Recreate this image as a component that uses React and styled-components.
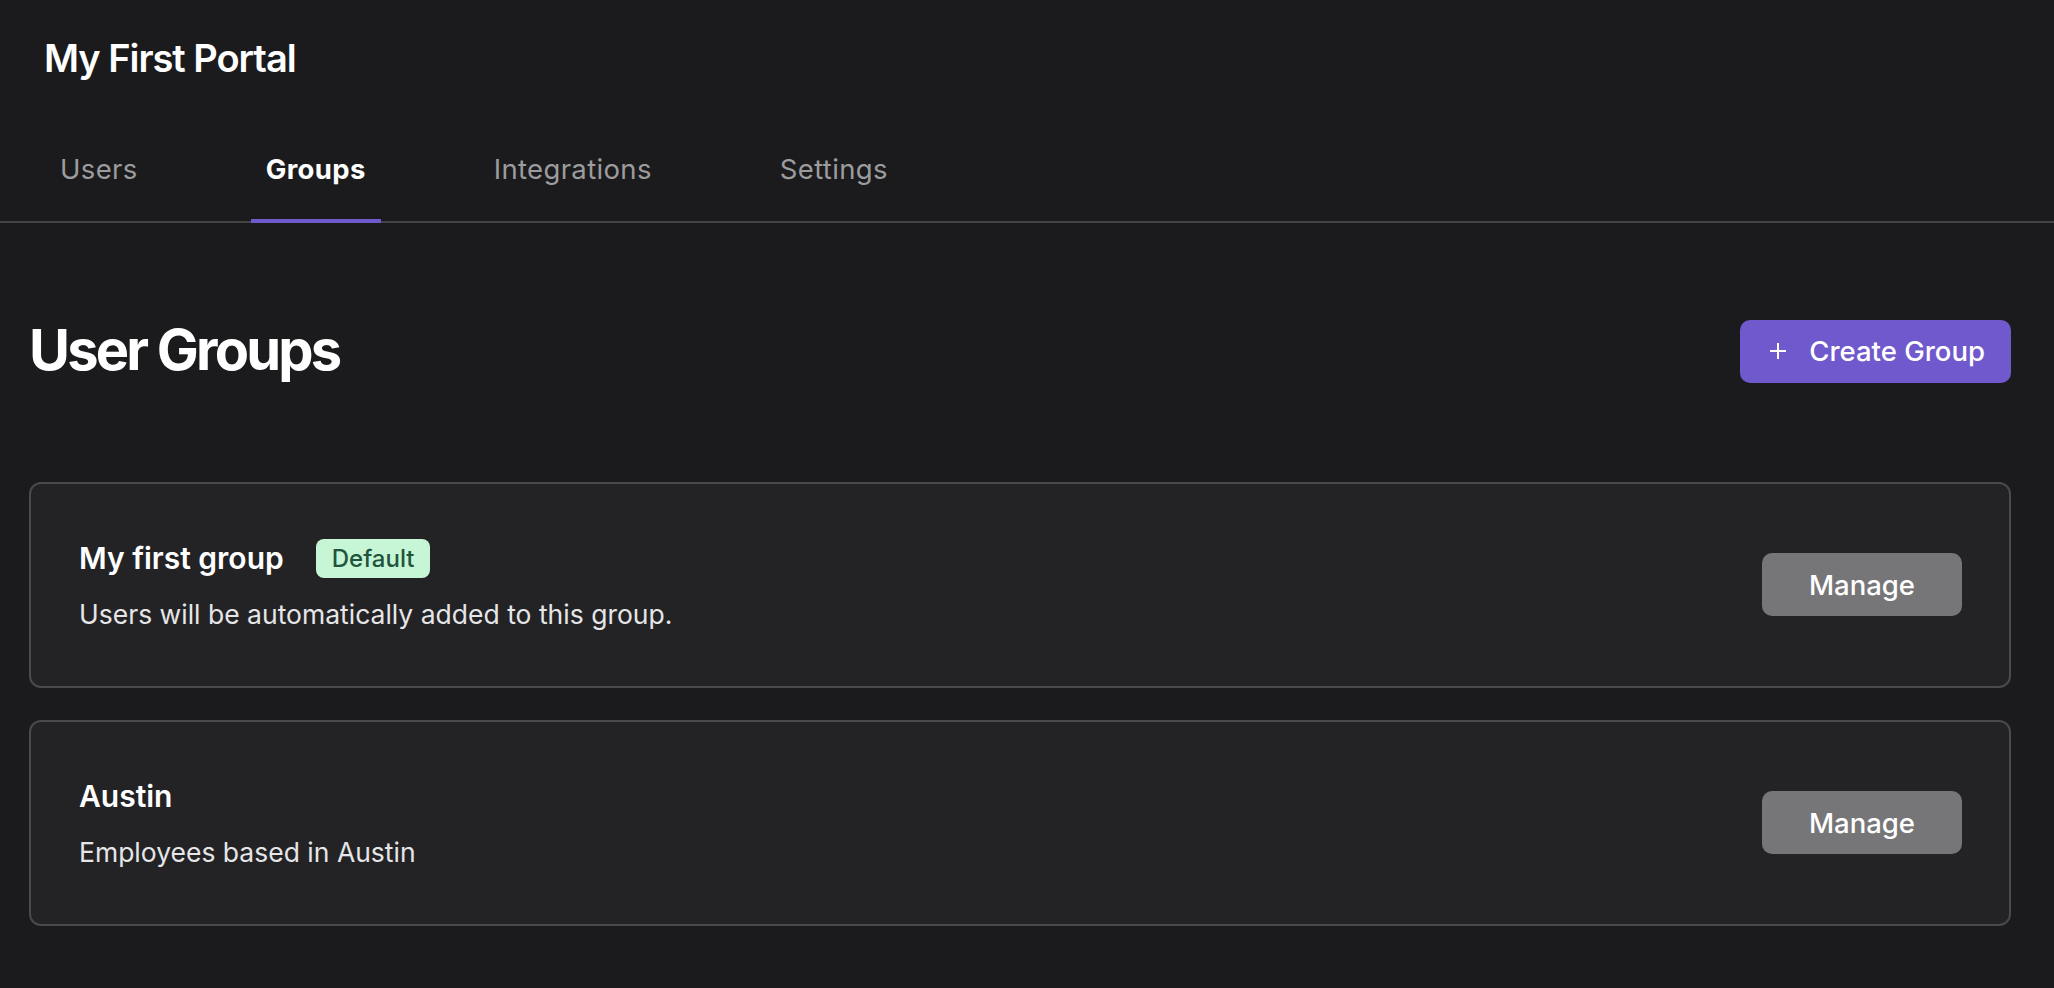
import styled, { createGlobalStyle } from 'styled-components'

const GlobalStyle = createGlobalStyle`
    html, body {
        margin: 0;
        padding: 0;
        background: #1b1b1d;
        color: #ffffff;
        font-family: Inter, 'Noto Sans', sans-serif;
    }
    * { box-sizing: border-box; }
`

const tabs = ['Users', 'Groups', 'Integrations', 'Settings']

const groups = [
    { name: 'My first group', description: 'Users will be automatically added to this group.', isDefault: true },
    { name: 'Austin', description: 'Employees based in Austin', isDefault: false },
]

const Header = styled.header`
    padding-top: 36px;
`

const PortalTitle = styled.h1`
    margin: 0;
    padding-left: 44px;
    font-size: 38px;
    line-height: 1.2;
    font-weight: 600;
    letter-spacing: -0.027em;
`

const TabList = styled.nav`
    display: flex;
    gap: 98px;
    margin-top: 37px;
    padding-left: 45px;
    border-bottom: 2px solid #444446;
`

const Tab = styled.button`
    background: none;
    border: none;
    border-bottom: 4px solid ${p => p.$active ? '#7059cd' : 'transparent'};
    margin-bottom: -2px;
    padding: 31px 15px 30px;
    font-family: inherit;
    font-size: 27.5px;
    letter-spacing: 0.35px;
    line-height: 1.45;
    font-weight: ${p => p.$active ? 700 : 400};
    color: ${p => p.$active ? '#ffffff' : '#9c9c9e'};
    cursor: pointer;
`

const Main = styled.main`
    padding: 94px 43px 40px 29px;
`

const TitleRow = styled.div`
    display: flex;
    align-items: center;
    justify-content: space-between;
`

const PageTitle = styled.h2`
    margin: 0;
    font-size: 56px;
    line-height: 1.2;
    font-weight: 700;
    letter-spacing: -0.05em;
`

const CreateButton = styled.button`
    display: flex;
    align-items: center;
    gap: 23px;
    height: 63px;
    padding: 0 26px 0 30px;
    border: none;
    border-radius: 10px;
    background: #7059cd;
    color: #ffffff;
    font-family: inherit;
    font-size: 27.5px;
    font-weight: 500;
    cursor: pointer;
`

const CardList = styled.div`
    display: flex;
    flex-direction: column;
    gap: 32px;
    margin-top: 97px;
`

const Card = styled.section`
    display: flex;
    align-items: center;
    justify-content: space-between;
    min-height: 206px;
    padding: 0 47px 0 48px;
    background: #232325;
    border: 2px solid #4a4a4d;
    border-radius: 12px;
`

const CardBody = styled.div`
    display: flex;
    flex-direction: column;
    gap: 17px;
    padding-top: 5px;
`

const NameRow = styled.div`
    display: flex;
    align-items: center;
    gap: 32px;
    height: 39px;
`

const GroupName = styled.h3`
    margin: 0;
    font-size: 30px;
    line-height: 1.3;
    font-weight: 600;
`

const Badge = styled.span`
    display: inline-flex;
    align-items: center;
    height: 39px;
    padding: 0 16px;
    border-radius: 8px;
    background: #c6f6d5;
    color: #22543d;
    font-size: 24px;
    font-weight: 500;
`

const Description = styled.p`
    margin: 0;
    font-size: 26.5px;
    line-height: 1.5;
    color: #e6e6e8;
`

const ManageButton = styled.button`
    width: 200px;
    height: 63px;
    border: none;
    border-radius: 10px;
    background: #767678;
    color: #ffffff;
    font-family: inherit;
    font-size: 27.5px;
    font-weight: 500;
    cursor: pointer;
`

const PlusIcon = () => (
    <svg width="16" height="16" viewBox="0 0 16 16" fill="none" stroke="currentColor" strokeWidth="2" strokeLinecap="square">
        <line x1="8" y1="1" x2="8" y2="15" />
        <line x1="1" y1="8" x2="15" y2="8" />
    </svg>
)

export default function App() {
    return (
        <>
            <GlobalStyle />
            <Header>
                <PortalTitle>My First Portal</PortalTitle>
                <TabList>
                    {tabs.map(t => (
                        <Tab key={t} $active={t === 'Groups'}>{t}</Tab>
                    ))}
                </TabList>
            </Header>
            <Main>
                <TitleRow>
                    <PageTitle>User Groups</PageTitle>
                    <CreateButton>
                        <PlusIcon />
                        Create Group
                    </CreateButton>
                </TitleRow>
                <CardList>
                    {groups.map(g => (
                        <Card key={g.name}>
                            <CardBody>
                                <NameRow>
                                    <GroupName>{g.name}</GroupName>
                                    {g.isDefault && <Badge>Default</Badge>}
                                </NameRow>
                                <Description>{g.description}</Description>
                            </CardBody>
                            <ManageButton>Manage</ManageButton>
                        </Card>
                    ))}
                </CardList>
            </Main>
        </>
    )
}
